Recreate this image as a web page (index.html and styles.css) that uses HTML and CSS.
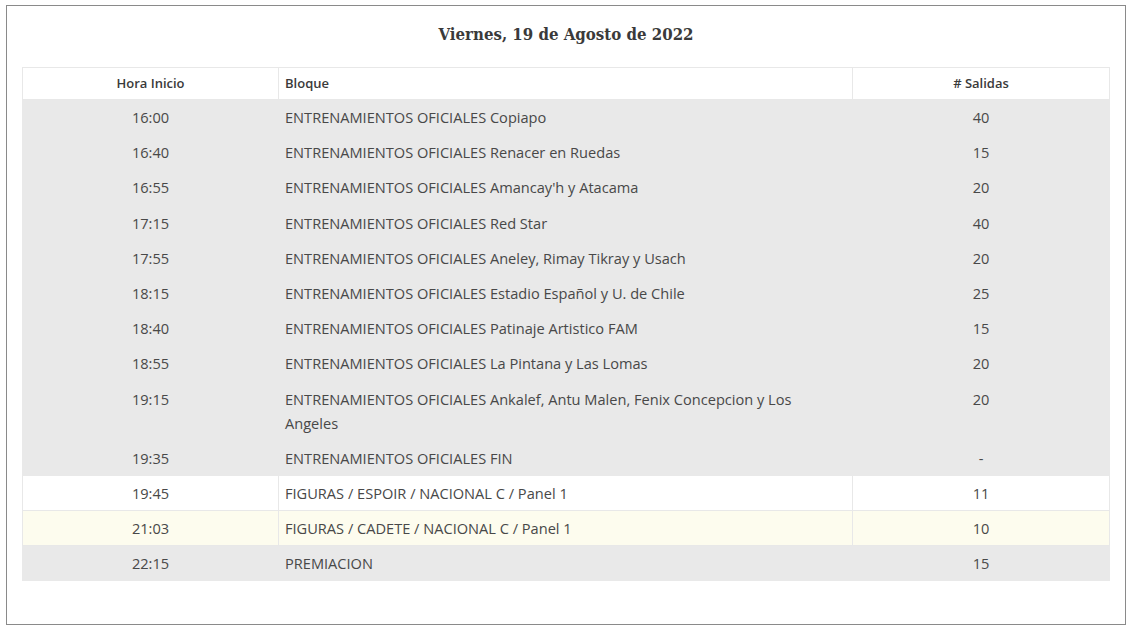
FILE: index.html
```html
<!DOCTYPE html>
<html lang="es">
<head>
<meta charset="utf-8">
<title>Programa</title>
<link rel="stylesheet" href="styles.css">
</head>
<body>
<div class="box">
  <h2 class="title">Viernes, 19 de Agosto de 2022</h2>
  <table class="sched">
    <colgroup><col class="c1"><col class="c2"><col class="c3"></colgroup>
    <thead>
      <tr><th class="ctr">Hora Inicio</th><th class="left">Bloque</th><th class="ctr"># Salidas</th></tr>
    </thead>
    <tbody>
      <tr class="gray"><td class="ctr">16:00</td><td>ENTRENAMIENTOS OFICIALES Copiapo</td><td class="ctr">40</td></tr>
      <tr class="gray"><td class="ctr">16:40</td><td>ENTRENAMIENTOS OFICIALES Renacer en Ruedas</td><td class="ctr">15</td></tr>
      <tr class="gray"><td class="ctr">16:55</td><td>ENTRENAMIENTOS OFICIALES Amancay'h y Atacama</td><td class="ctr">20</td></tr>
      <tr class="gray"><td class="ctr">17:15</td><td>ENTRENAMIENTOS OFICIALES Red Star</td><td class="ctr">40</td></tr>
      <tr class="gray"><td class="ctr">17:55</td><td>ENTRENAMIENTOS OFICIALES Aneley, Rimay Tikray y Usach</td><td class="ctr">20</td></tr>
      <tr class="gray"><td class="ctr">18:15</td><td>ENTRENAMIENTOS OFICIALES Estadio Español y U. de Chile</td><td class="ctr">25</td></tr>
      <tr class="gray"><td class="ctr">18:40</td><td>ENTRENAMIENTOS OFICIALES Patinaje Artistico FAM</td><td class="ctr">15</td></tr>
      <tr class="gray"><td class="ctr">18:55</td><td>ENTRENAMIENTOS OFICIALES La Pintana y Las Lomas</td><td class="ctr">20</td></tr>
      <tr class="gray"><td class="ctr">19:15</td><td>ENTRENAMIENTOS OFICIALES Ankalef, Antu Malen, Fenix Concepcion y Los Angeles</td><td class="ctr">20</td></tr>
      <tr class="gray"><td class="ctr">19:35</td><td>ENTRENAMIENTOS OFICIALES FIN</td><td class="ctr">-</td></tr>
      <tr class="white"><td class="ctr">19:45</td><td>FIGURAS / ESPOIR / NACIONAL C / Panel 1</td><td class="ctr">11</td></tr>
      <tr class="yellow"><td class="ctr">21:03</td><td>FIGURAS / CADETE / NACIONAL C / Panel 1</td><td class="ctr">10</td></tr>
      <tr class="gray"><td class="ctr">22:15</td><td>PREMIACION</td><td class="ctr">15</td></tr>
    </tbody>
  </table>
</div>
</body>
</html>
```

FILE: styles.css
```css
html, body { background: #fff; }
body {
  margin: 5px 7px 0 6px;
  font-family: "Open Sans", "Noto Sans", sans-serif;
  color: #555;
}
.box {
  border: 1px solid #8a8a8a;
  padding: 0 15px 43px 15px;
}
.title {
  margin: 16px 0 21px;
  text-align: center;
  font-family: "DejaVu Serif Condensed", "DejaVu Serif", serif;
  font-stretch: condensed;
  font-weight: bold;
  font-size: 16.7px;
  line-height: 24px;
  color: #3a3a3a;
}
.sched {
  width: 100%;
  border-collapse: collapse;
  table-layout: fixed;
}
.c1 { width: 256px; }
.c3 { width: 257px; }
.sched th {
  font-size: 13px;
  font-weight: 600;
  color: #3a3a3a;
  line-height: 20px;
  padding: 5px 6px 6px;
  border: 1px solid #e8e8e8;
  background: #fff;
}
.sched th.left { text-align: left; }
.sched td {
  font-size: 14.6px;
  line-height: 24px;
  padding: 5.1px 6px;
  border: 1px solid #e8e8e8;
  vertical-align: top;
  color: #484848;
}
.ctr { text-align: center; }
.gray td { background: #e9e9e9; border-color: #e9e9e9; }
.white td { background: #fff; }
.yellow td { background: #fdfcee; }
```
